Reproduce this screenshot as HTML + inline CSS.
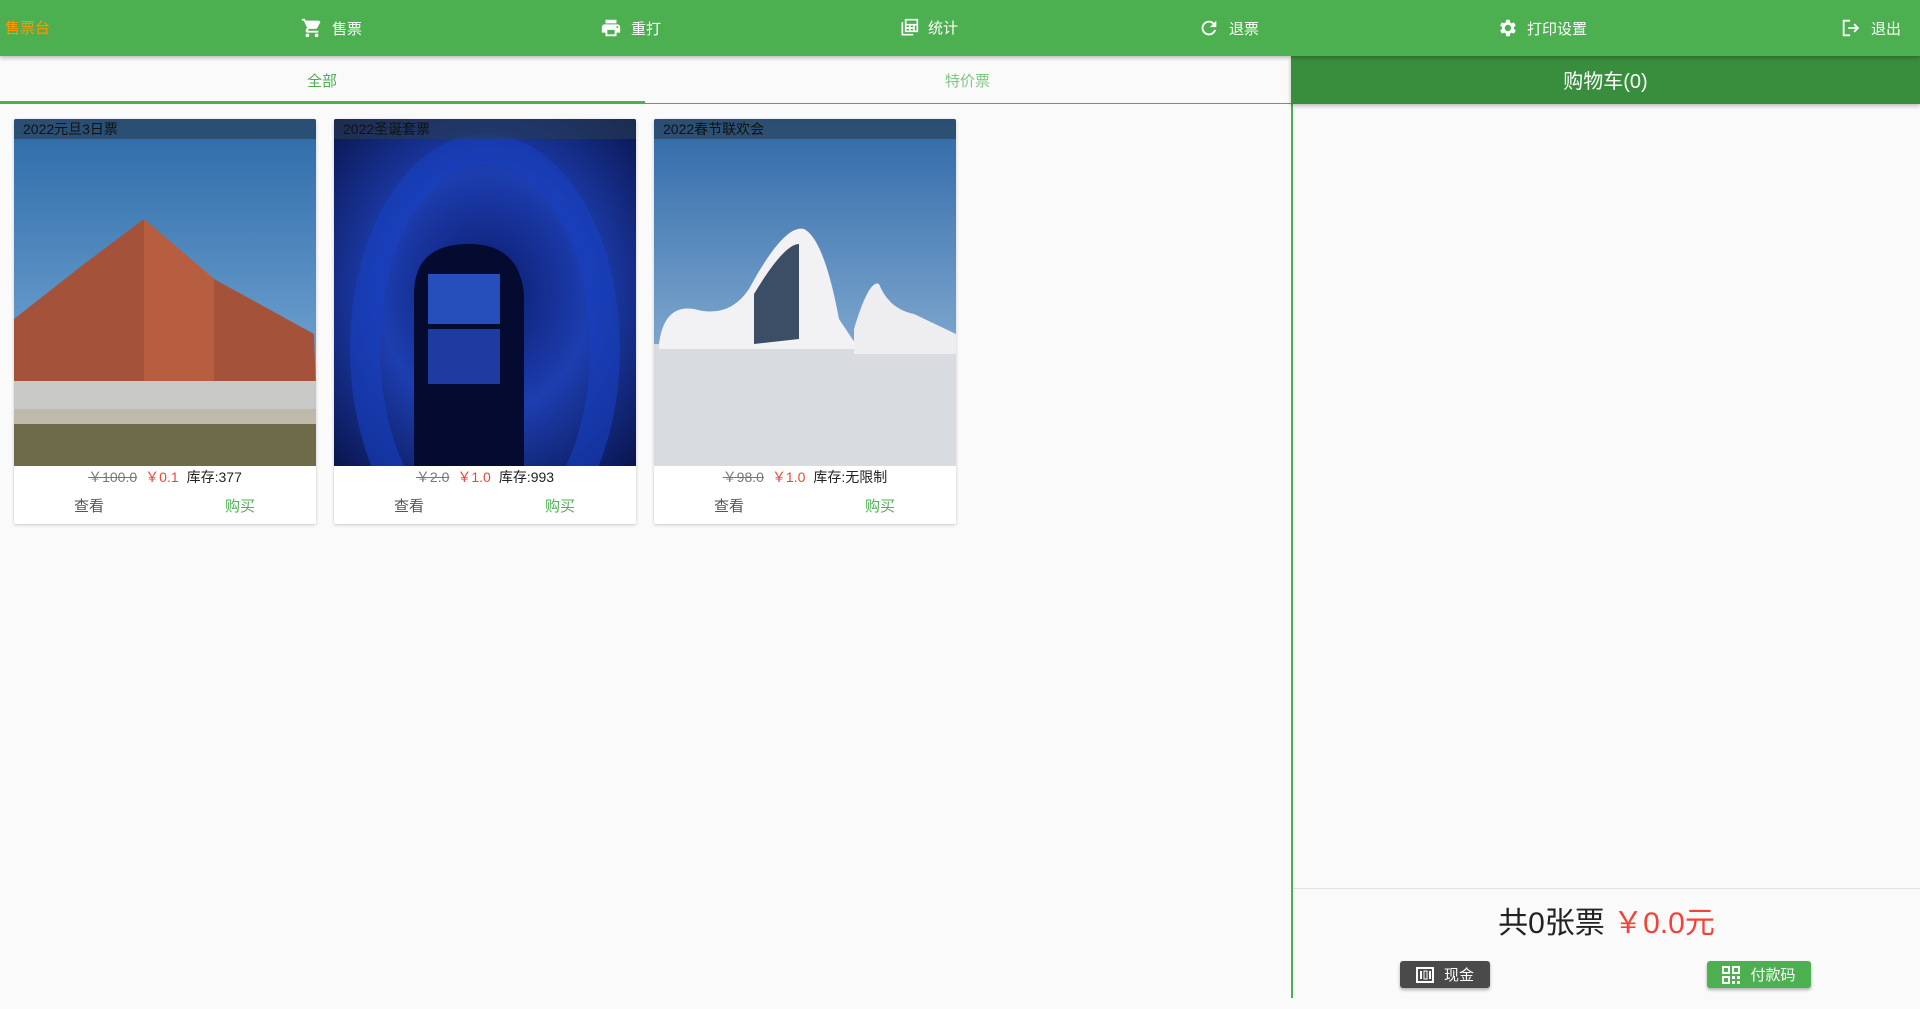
<!DOCTYPE html>
<html><head><meta charset="utf-8"><style>
*{margin:0;padding:0;box-sizing:border-box}
body{width:1920px;height:1009px;background:#fafafa;font-family:"Liberation Sans","Noto Sans CJK SC",sans-serif;position:relative;overflow:hidden}
.hdr{position:absolute;left:0;top:0;width:1920px;height:56px;background:#4caf50;box-shadow:0 2px 4px rgba(0,0,0,.25);z-index:2}
.hdr .t{position:absolute;top:17px;font-size:15px;color:#fff;display:flex;align-items:center;gap:9px}
.hdr svg{fill:#fff}
.tabs{position:absolute;left:0;top:56px;width:1291px;height:48px;border-bottom:1px solid #4caf50}
.tab{position:absolute;top:14px;font-size:15px;color:#4caf50}
.ul{position:absolute;left:0;top:101px;width:645px;height:3px;background:#4caf50}
.card{position:absolute;top:119px;width:302px;height:405px;background:#fff;box-shadow:0 1px 3px rgba(0,0,0,.2);border-radius:2px;overflow:hidden}
.card svg.img{position:absolute;left:0;top:0}
.ttl{position:absolute;left:0;top:0;width:302px;height:20px;background:rgba(40,60,80,.6);font-size:14px;color:#111;padding-left:9px;line-height:20px}
.pr{position:absolute;top:348px;width:302px;text-align:center;font-size:14px;color:#222}
.pr s{color:#777}.pr .r{color:#f44336;margin:0 8px}
.btn{position:absolute;top:376px;font-size:15px}
.rp{position:absolute;left:1291px;top:56px;width:629px;height:942px;border-left:2px solid #4caf50}
.ch{position:absolute;left:1291px;top:56px;width:629px;height:48px;background:#388e3c;color:#fff;font-size:20px;text-align:center;line-height:52px;box-shadow:0 2px 4px rgba(0,0,0,.25)}
.tot{position:absolute;left:1293px;top:898px;width:627px;text-align:center;font-size:30px;color:#222}
.pb{position:absolute;top:961px;height:27px;border-radius:3px;color:#fff;font-size:15px;display:flex;align-items:center;justify-content:center;gap:10px;box-shadow:0 2px 3px rgba(0,0,0,.3)}
</style></head><body>
<div class="hdr">
<div class="t" style="left:5px;color:#ff9800">售票台</div>
<div class="t" style="left:301px"><svg width="22" height="22" viewBox="0 0 24 24"><path d="M7 18a2 2 0 1 0 0 4 2 2 0 0 0 0-4zM1 2v2h2l3.6 7.6-1.4 2.4c-.1.3-.2.6-.2 1 0 1.1.9 2 2 2h12v-2H7.4l1.1-2h7.5c.8 0 1.4-.4 1.7-1l3.6-6.5L19.4 4H5.2l-.9-2H1zm16 16a2 2 0 1 0 0 4 2 2 0 0 0 0-4z"/></svg>售票</div>
<div class="t" style="left:600px"><svg width="22" height="22" viewBox="0 0 24 24"><path d="M19 8H5c-1.7 0-3 1.3-3 3v6h4v4h12v-4h4v-6c0-1.700-1.3-3-3-3zm-3 11H8v-5h8v5zm3-7c-.6 0-1-.4-1-1s.4-1 1-1 1 .4 1 1-.4 1-1 1zm-1-9H6v4h12V3z"/></svg>重打</div>
<div class="t" style="left:899px"><svg width="20" height="20" viewBox="0 0 24 24"><path d="M3 5v16h14v-2H5V5zM7 1v16h16V1zm2 2h12v4H9zm0 6h3v2H9zm5 0h3v2h-3zm5 0h2v6h-2zM9 13h3v2H9zm5 0h3v2h-3z"/></svg>统计</div>
<div class="t" style="left:1198px"><svg width="22" height="22" viewBox="0 0 24 24"><path d="M17.6 6.4A8 8 0 1 0 19.7 14h-2.1A6 6 0 1 1 12 6c1.7 0 3.1.7 4.2 1.8L13 11h7V4z"/></svg>退票</div>
<div class="t" style="left:1496px"><svg width="22" height="22" viewBox="0 0 24 24"><path d="M19.4 13a7.5 7.5 0 0 0 0-2l2.1-1.6-2-3.5-2.5 1a7 7 0 0 0-1.7-1L15 3h-4l-.4 2.9a7 7 0 0 0-1.7 1l-2.5-1-2 3.5L6.6 11a7.5 7.5 0 0 0 0 2l-2.1 1.6 2 3.5 2.5-1c.5.4 1.100.7 1.7 1L11 21h4l.4-2.9c.6-.3 1.2-.6 1.7-1l2.5 1 2-3.5zM13 15.5a3.5 3.5 0 1 1 0-7 3.5 3.5 0 0 1 0 7z"/></svg>打印设置</div>
<div class="t" style="left:1840px"><svg width="22" height="22" viewBox="0 0 24 24"><path d="M3 3h8v2H5v14h6v2H3zM16 7l5 5-5 5-1.4-1.4 2.6-2.6H9v-2h8.2l-2.6-2.6z"/></svg>退出</div>
</div>
<div class="tabs"><div class="tab" style="left:307px">全部</div><div class="tab" style="left:945px;color:#81c784">特价票</div></div>
<div class="ul"></div>

<div class="card" style="left:14px">
<svg class="img" width="302" height="347" viewBox="0 0 302 347"><defs><linearGradient id="s1" x1="0" y1="0" x2="0" y2="1"><stop offset="0" stop-color="#2c6aa8"/><stop offset="1" stop-color="#8ab8e0"/></linearGradient></defs>
<rect width="302" height="347" fill="url(#s1)"/>
<polygon points="0,200 70,145 130,100 200,160 300,215 302,270 0,270" fill="#a4533a"/>
<polygon points="130,100 200,160 200,270 130,270" fill="#b85e40"/>
<polygon points="0,262 302,262 302,290 0,290" fill="#c8c8c6"/>
<rect y="290" width="302" height="15" fill="#bfb9ab"/>
<rect y="305" width="302" height="42" fill="#6d6b48"/>
</svg>
<div class="ttl">2022元旦3日票</div>
<div class="pr"><s>￥100.0</s><span class="r">￥0.1</span>库存:377</div>
<div class="btn" style="left:60px;color:#555">查看</div><div class="btn" style="left:211px;color:#4caf50">购买</div>
</div>

<div class="card" style="left:334px">
<svg class="img" width="302" height="347" viewBox="0 0 302 347"><defs><radialGradient id="s2" cx=".5" cy=".5" r=".7"><stop offset="0" stop-color="#0a1a6a"/><stop offset=".5" stop-color="#1d3eb0"/><stop offset="1" stop-color="#0a1650"/></radialGradient></defs>
<rect width="302" height="347" fill="url(#s2)"/>
<ellipse cx="151" cy="230" rx="120" ry="200" fill="none" stroke="#1840c0" stroke-width="30" opacity=".6"/>
<path d="M80 350 V175 Q80 125 135 125 Q185 125 190 175 V350z" fill="#050a30"/>
<rect x="94" y="155" width="72" height="50" fill="#3060e0" opacity=".8"/>
<rect x="94" y="210" width="72" height="55" fill="#2850d0" opacity=".7"/>
</svg>
<div class="ttl">2022圣诞套票</div>
<div class="pr"><s>￥2.0</s><span class="r">￥1.0</span>库存:993</div>
<div class="btn" style="left:60px;color:#555">查看</div><div class="btn" style="left:211px;color:#4caf50">购买</div>
</div>

<div class="card" style="left:654px">
<svg class="img" width="302" height="347" viewBox="0 0 302 347"><defs><linearGradient id="s3" x1="0" y1="0" x2="0" y2="1"><stop offset="0" stop-color="#2f69a8"/><stop offset="1" stop-color="#a6c6e2"/></linearGradient></defs>
<rect width="302" height="347" fill="url(#s3)"/>
<rect y="225" width="302" height="122" fill="#d8dce0"/>
<path d="M5 225 Q10 185 40 190 Q75 200 95 170 Q130 105 150 110 Q170 120 185 200 L205 230 L5 230z" fill="#f2f2f4"/>
<path d="M100 175 Q130 125 145 125 L145 220 L100 225z" fill="#3c4e66"/>
<path d="M200 210 Q215 160 225 165 Q235 190 260 195 L302 215 L302 235 L200 235z" fill="#eeeef0"/>
</svg>
<div class="ttl">2022春节联欢会</div>
<div class="pr"><s>￥98.0</s><span class="r">￥1.0</span>库存:无限制</div>
<div class="btn" style="left:60px;color:#555">查看</div><div class="btn" style="left:211px;color:#4caf50">购买</div>
</div>

<div class="rp"></div>
<div class="ch">购物车(0)</div>
<div style="position:absolute;left:1293px;top:888px;width:627px;height:1px;background:#e0e0e0"></div>
<div class="tot">共0张票 <span style="color:#f44336">￥0.0元</span></div>
<div class="pb" style="left:1400px;width:90px;background:#4a4a4a"><svg width="18" height="16" viewBox="0 0 18 16"><rect x="1" y="1" width="16" height="14" fill="none" stroke="#fff" stroke-width="2"/><rect x="4" y="4" width="2" height="8" fill="#fff"/><rect x="8" y="4" width="3" height="8" fill="none" stroke="#fff"/><rect x="13" y="4" width="2" height="8" fill="#fff"/></svg>现金</div>
<div class="pb" style="left:1707px;width:104px;background:#4caf50"><svg width="18" height="18" viewBox="0 0 18 18" fill="#fff"><path d="M0 0h8v8H0zM2 2v4h4V2zM10 0h8v8h-8zm2 2v4h4V2zM0 10h8v8H0zm2 2v4h4v-4zM10 10h3v3h-3zm5 0h3v3h-3zm-5 5h3v3h-3zm5 0h3v3h-3z"/></svg>付款码</div>
</body></html>
